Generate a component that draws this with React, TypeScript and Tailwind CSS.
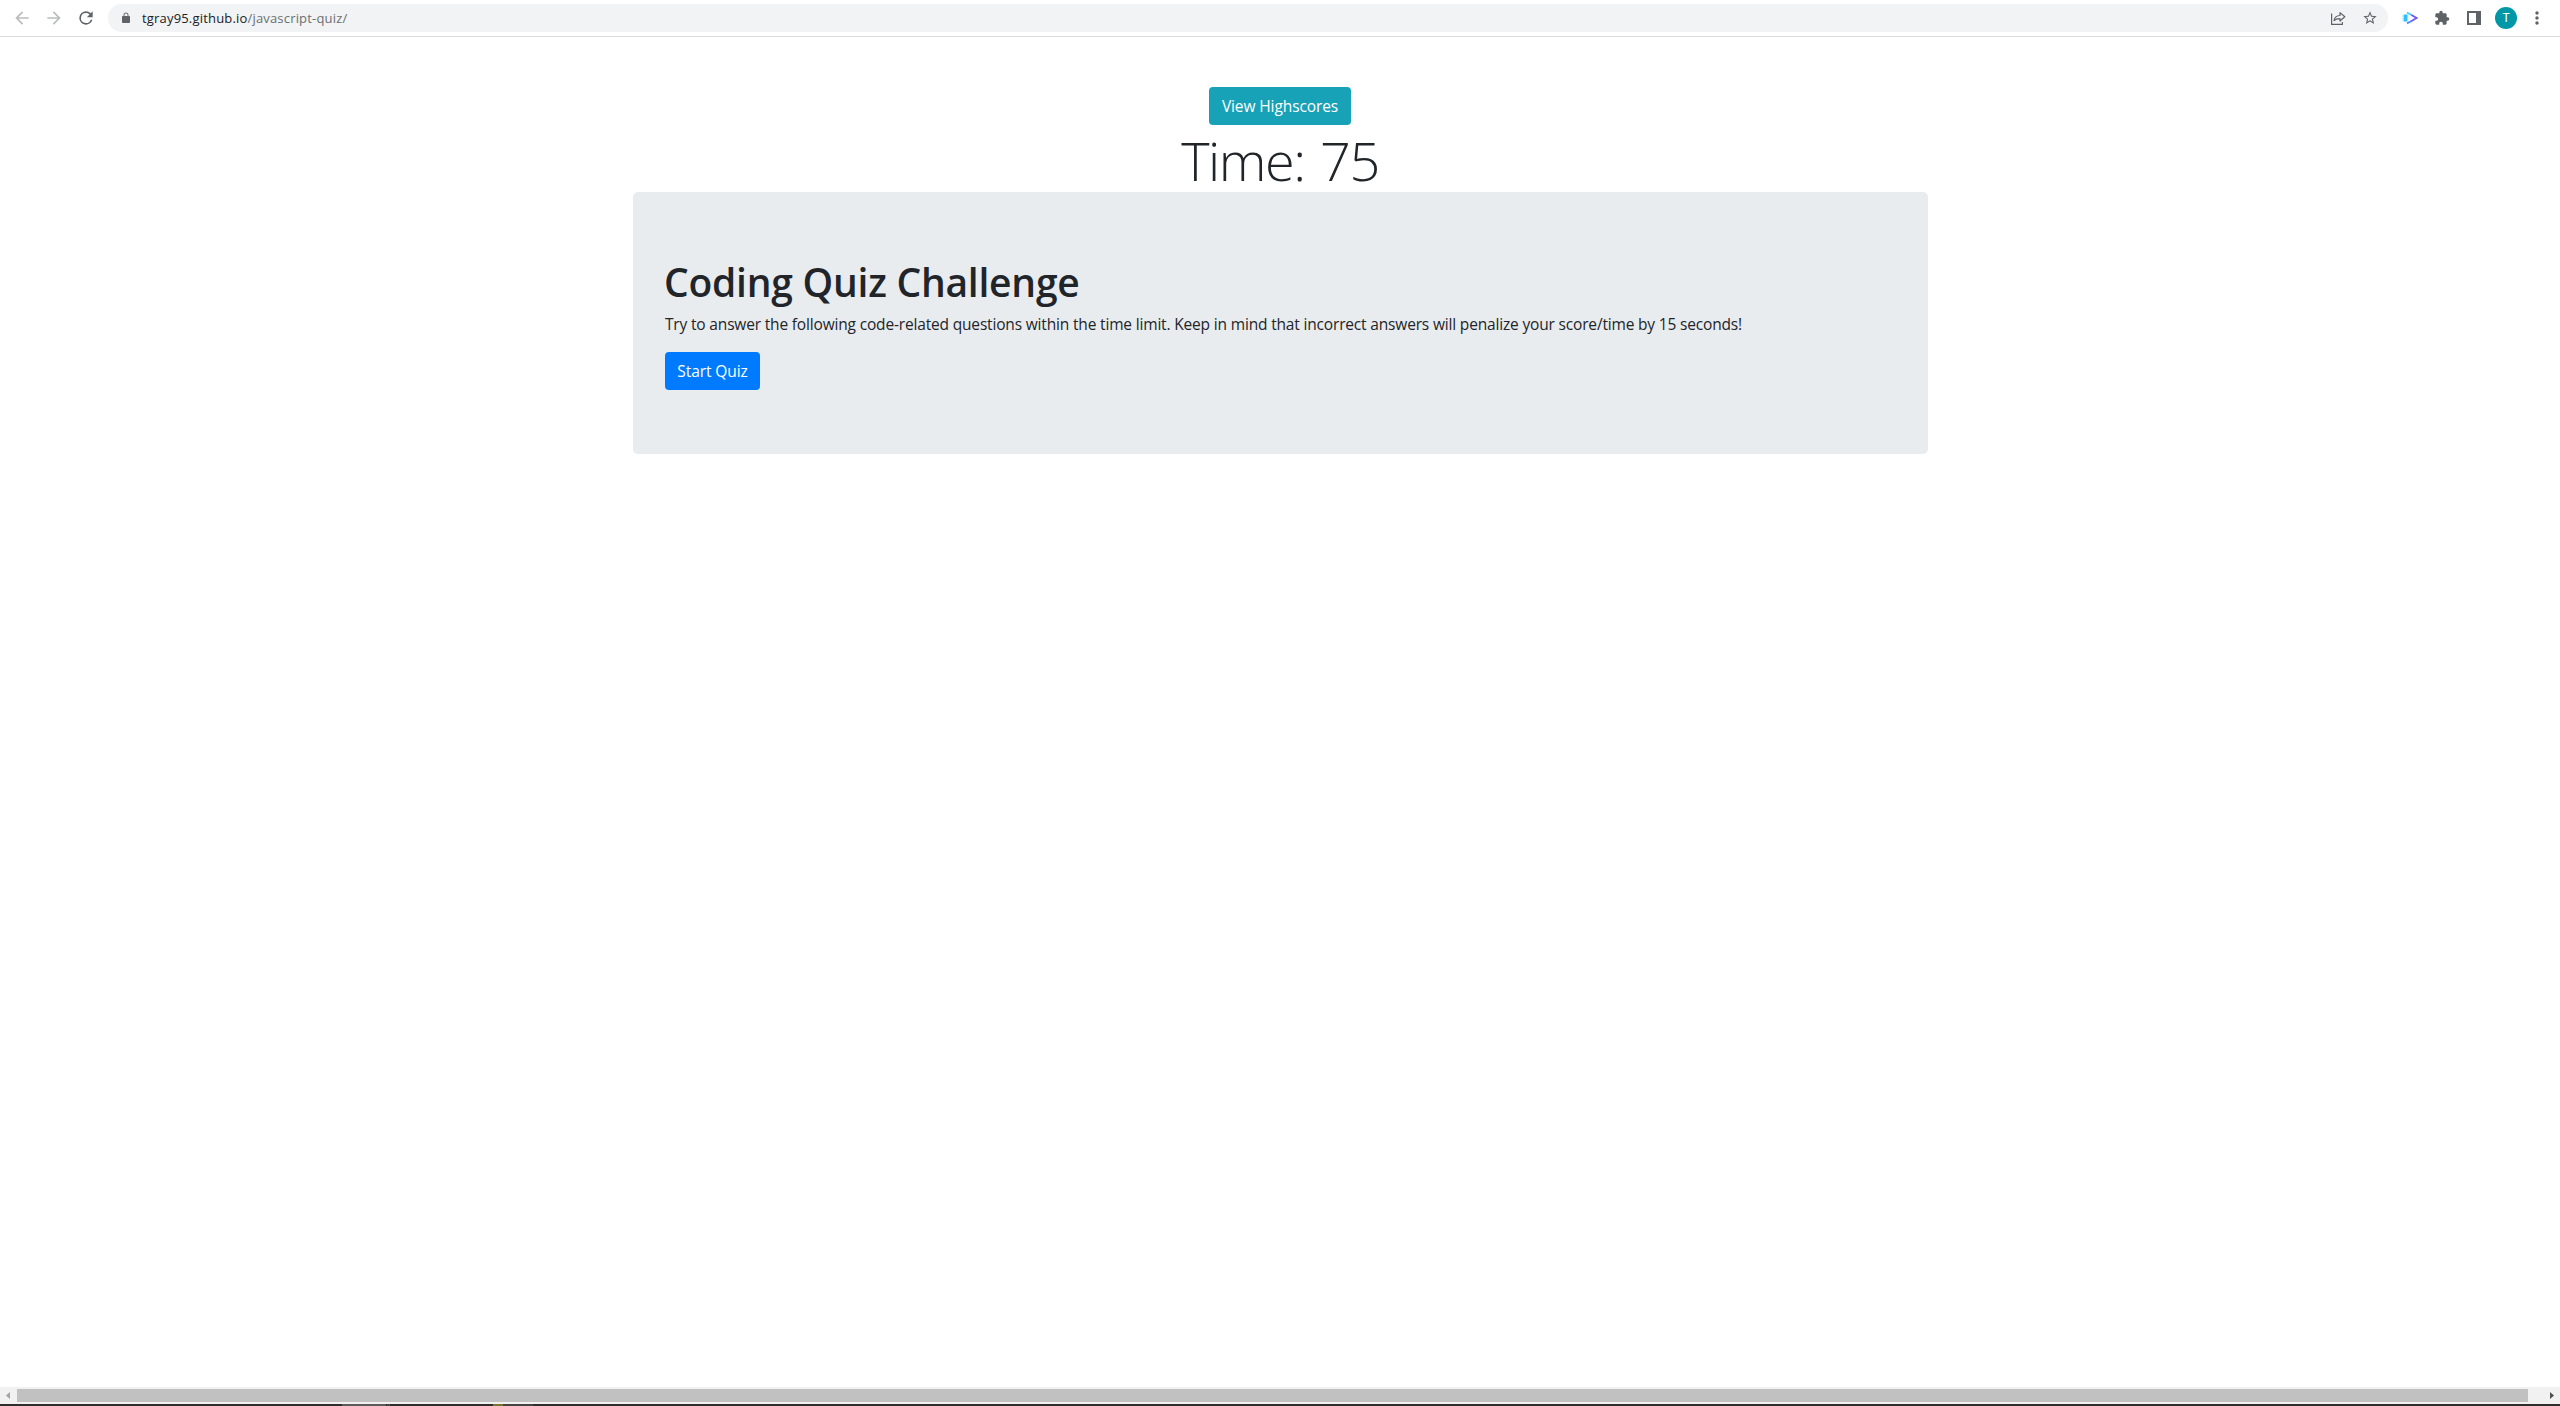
import React from "react";

function Icon({ d, className }: { d: string; className: string }) {
  return (
    <svg viewBox="0 0 24 24" fill="currentColor" className={className} aria-hidden="true">
      <path d={d} />
    </svg>
  );
}

const BACK = "M20 11H7.83l5.59-5.59L12 4l-8 8 8 8 1.41-1.41L7.83 13H20v-2z";
const FORWARD = "M12 4l-1.41 1.41L16.17 11H4v2h12.17l-5.58 5.59L12 20l8-8z";
const RELOAD =
  "M17.65 6.35A7.958 7.958 0 0 0 12 4a8 8 0 1 0 7.73 10h-2.08A6 6 0 1 1 12 6c1.66 0 3.14.69 4.22 1.78L13 11h7V4l-2.35 2.35z";
const LOCK =
  "M18 8h-1V6c0-2.76-2.24-5-5-5S7 3.24 7 6v2H6c-1.1 0-2 .9-2 2v10c0 1.1.9 2 2 2h12c1.1 0 2-.9 2-2V10c0-1.1-.9-2-2-2zM8.9 6c0-1.71 1.39-3.1 3.1-3.1s3.1 1.39 3.1 3.1v2H8.9V6z";
const STAR =
  "M22 9.24l-7.19-.62L12 2 9.19 8.63 2 9.24l5.46 4.73L5.82 21 12 17.27 18.18 21l-1.63-7.03L22 9.24zM12 15.4l-3.76 2.27 1-4.28-3.32-2.88 4.38-.38L12 6.1l1.71 4.04 4.38.38-3.32 2.88 1 4.28L12 15.4z";
const PUZZLE =
  "M20.5 11H19V7c0-1.1-.9-2-2-2h-4V3.5a2.5 2.5 0 0 0-5 0V5H4c-1.1 0-1.99.9-1.99 2v3.8H3.5c1.49 0 2.7 1.21 2.7 2.7s-1.21 2.7-2.7 2.7H2V20c0 1.1.9 2 2 2h3.8v-1.5c0-1.49 1.21-2.7 2.7-2.7s2.7 1.21 2.7 2.7V22H17c1.1 0 2-.9 2-2v-4h1.5a2.5 2.5 0 0 0 0-5z";
const DOTS =
  "M12 8c1.1 0 2-.9 2-2s-.9-2-2-2-2 .9-2 2 .9 2 2 2zm0 2c-1.1 0-2 .9-2 2s.9 2 2 2 2-.9 2-2-.9-2-2-2zm0 6c-1.1 0-2 .9-2 2s.9 2 2 2 2-.9 2-2-.9-2-2-2z";

function Toolbar() {
  return (
    <header className="flex h-[37px] items-start border-b border-[#dadce0] bg-white pt-1 pl-3 text-[#5f6368]">
      <div className="flex h-7 items-center gap-3">
        <Icon d={BACK} className="size-5 text-[#babcbe]" />
        <Icon d={FORWARD} className="size-5 text-[#babcbe]" />
        <Icon d={RELOAD} className="size-5" />
      </div>
      <div className="ml-3 flex h-7 w-[2280px] items-center rounded-full bg-[#f1f3f4] pr-[10px] pl-3">
        <Icon d={LOCK} className="size-3" />
        <span className="ml-[10px] font-['Open_Sans',sans-serif] text-[13px] leading-7 tracking-[0.18px] text-[#202124]">
          tgray95.github.io<span className="text-[#6b6f73]">/javascript-quiz/</span>
        </span>
        <svg viewBox="0 0 16 16" className="ml-auto size-4" fill="none" stroke="currentColor" strokeWidth="1.2">
          <path d="M1.600 3.500v10.900h10.800V12" />
          <path d="M4 10.500c.6-3.400 2.500-4.900 6-5V2.600l4.800 4.200-4.800 4.200V8.600c-2.600 0-4.600.4-6 1.900z" strokeLinejoin="round" />
        </svg>
        <Icon d={STAR} className="ml-4 size-4" />
      </div>
      <div className="flex h-7 items-center pl-[14px]">
        <svg viewBox="0 0 16 16" className="size-4">
          <path d="M0.500 4.500h1.500v7h-1.500z" fill="#a5e6ff" />
          <path d="M2 4.500h3.500v7h-3.500z" fill="#2fc0fb" />
          <path d="M5 2.600l5 2.700" stroke="#45d3ff" strokeWidth="1.800" />
          <path d="M5 13.400l5-2.700" stroke="#4f8cfb" strokeWidth="1.800" />
          <path d="M9.500 5l5 3-5 3" fill="none" stroke="#7359f6" strokeWidth="1.900" />
        </svg>
        <Icon d={PUZZLE} className="ml-4 size-4" />
        <span className="ml-[17px] h-[14px] w-[14px] border-2 border-r-[5px] border-[#5f6368]" />
        <span className="ml-[14px] flex size-[22px] items-center justify-center rounded-full bg-[#0097a7] font-[Roboto,sans-serif] text-[12px] text-white">
          T
        </span>
        <Icon d={DOTS} className="ml-[10px] size-5" />
      </div>
    </header>
  );
}

function Scrollbar() {
  return (
    <div className="flex h-[17px] items-center bg-[#f1f1f1]">
      <div className="flex w-[17px] pl-[6px]">
        <svg viewBox="0 0 4 7" className="h-[7px] w-1" fill="#a3a3a3">
          <path d="M4 0v7L0 3.500z" />
        </svg>
      </div>
      <div className="h-[13px] w-[2511px] bg-[#c1c1c1]" />
      <div className="flex grow justify-end pr-[6px]">
        <svg viewBox="0 0 4 7" className="h-[7px] w-1" fill="#505050">
          <path d="M0 0v7l4-3.500z" />
        </svg>
      </div>
    </div>
  );
}

export default function App() {
  return (
    <div className="flex h-[1406px] w-[2560px] flex-col overflow-hidden bg-white font-['Open_Sans',sans-serif] text-[#212529]">
      <Toolbar />
      <main className="flex grow flex-col items-center pt-[50px]">
        <button className="h-[38px] w-[142px] rounded-[4px] bg-[#17a2b8] pt-px text-[15.5px] whitespace-nowrap tracking-[-0.1px] text-white">
          View Highscores
        </button>
        <h1 className="h-[67px] pt-[2px] text-[54px] leading-[67px] font-light tracking-[-1.5px] [word-spacing:3px]">
          Time: 75
        </h1>
        <section className="ml-[1px] h-[262px] w-[1295px] rounded-[5px] bg-[#e9ecef] px-8 py-16">
          <h2 className="-ml-px mb-2 h-12 pt-[2px] text-[39px] leading-[48px] font-semibold tracking-[-0.24px] whitespace-nowrap">
            Coding Quiz Challenge
          </h2>
          <p className="mb-4 text-[15.5px] leading-6 tracking-[-0.17px] whitespace-nowrap">
            Try to answer the following code-related questions within the time limit. Keep in mind that incorrect
            answers will penalize your score/time by 15 seconds!
          </p>
          <button className="h-[38px] w-[95px] rounded-[4px] bg-[#007bff] pt-px text-[15.5px] whitespace-nowrap tracking-[-0.1px] text-white">
            Start Quiz
          </button>
        </section>
      </main>
      <Scrollbar />
      <div className="flex h-[2px] bg-[#2f2d2e]">
        <div className="ml-[342px] w-11 bg-[#5c5a5b]" />
        <div className="ml-px w-[3px] bg-[#4a4849]" />
        <div className="ml-[103px] w-[10px] bg-[#7b7230]" />
        <div className="w-[30px] bg-[#454344]" />
      </div>
    </div>
  );
}
